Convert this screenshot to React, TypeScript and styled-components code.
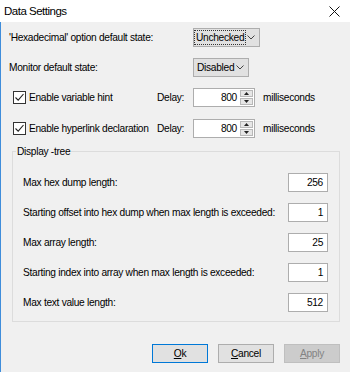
import React from 'react'
import styled, { createGlobalStyle } from 'styled-components'

const GlobalStyle = createGlobalStyle`
    body {
        margin: 0;
        background: #f0f0f0;
        font-family: "Liberation Sans", Arial, sans-serif;
        font-size: 10.2px;
        letter-spacing: -0.3px;
        color: #000;
        white-space: nowrap;
    }
`

const treeRows = [
    { label: 'Max hex dump length:', value: '256' },
    { label: 'Starting offset into hex dump when max length is exceeded:', value: '1' },
    { label: 'Max array length:', value: '25' },
    { label: 'Starting index into array when max length is exceeded:', value: '1' },
    { label: 'Max text value length:', value: '512' },
]

const App = () => {
  return (
    <Window>
        <GlobalStyle />
        <TitleBar>
            <Title>Data Settings</Title>
            <CloseIcon width="11" height="11" viewBox="0 0 11 11">
                <path d="M0.5 0.5 L10.5 10.5 M10.5 0.5 L0.5 10.5" stroke="#111" strokeWidth="1" fill="none" />
            </CloseIcon>
        </TitleBar>
        <Body>
            <Row $top={6}>
                <Label>'Hexadecimal' option default state:</Label>
                <Combo $width={67}>
                    <FocusText>Unchecked</FocusText>
                    <Chevron />
                </Combo>
            </Row>
            <Row $top={11}>
                <Label>Monitor default state:</Label>
                <Combo $width={56}>
                    <ComboText>Disabled</ComboText>
                    <Chevron />
                </Combo>
            </Row>
            <CheckRow $top={11}>
                <CheckLabel>
                    <CheckBox />
                    Enable variable hint
                </CheckLabel>
                <DelayLabel>Delay:</DelayLabel>
                <Spinner value="800" />
                <Unit>milliseconds</Unit>
            </CheckRow>
            <CheckRow $top={12}>
                <CheckLabel>
                    <CheckBox />
                    Enable hyperlink declaration
                </CheckLabel>
                <DelayLabel>Delay:</DelayLabel>
                <Spinner value="800" />
                <Unit>milliseconds</Unit>
            </CheckRow>
            <Group>
                <Legend>Display -tree</Legend>
                {treeRows.map((r) => (
                    <TreeRow key={r.label}>
                        <span>{r.label}</span>
                        <NumBox>{r.value}</NumBox>
                    </TreeRow>
                ))}
            </Group>
            <Buttons>
                <Button $focused><u>O</u>k</Button>
                <Button><u>C</u>ancel</Button>
                <Button $disabled><u>A</u>pply</Button>
            </Buttons>
        </Body>
    </Window>
  )
}

const CheckBox = () => (
    <Box>
        <svg width="11" height="11" viewBox="0 0 11 11">
            <path d="M1.5 5.5 L4.2 8.2 L9.5 2" stroke="#222" strokeWidth="1.1" fill="none" />
        </svg>
    </Box>
)

const Chevron = () => (
    <ChevronIcon width="8" height="5" viewBox="0 0 8 5">
        <path d="M0.5 0.5 L4 4 L7.5 0.5" stroke="#444" strokeWidth="1" fill="none" />
    </ChevronIcon>
)

const Spinner = ({ value }: { value: string }) => (
    <SpinBox>
        <SpinValue>{value}</SpinValue>
        <SpinButtons>
            <SpinBtn>
                <svg width="5" height="3" viewBox="0 0 5 3"><path d="M0 3 L2.5 0 L5 3 Z" fill="#222" /></svg>
            </SpinBtn>
            <SpinBtn>
                <svg width="5" height="3" viewBox="0 0 5 3"><path d="M0 0 L2.5 3 L5 0 Z" fill="#222" /></svg>
            </SpinBtn>
        </SpinButtons>
    </SpinBox>
)

const Window = styled.div`
    width: 350px;
    height: 372px;
    display: flex;
    flex-direction: column;
    overflow: hidden;
`

const TitleBar = styled.div`
    height: 22px;
    flex-shrink: 0;
    background: #fff;
    display: flex;
    align-items: center;
    justify-content: space-between;
    padding: 0 10px 0 4px;
`

const Title = styled.span`
    font-size: 11.5px;
    letter-spacing: -0.5px;
`

const CloseIcon = styled.svg`
    display: block;
`

const Body = styled.div`
    flex: 1;
    border-left: 1px solid #3f8ddb;
    padding-left: 8px;
    display: flex;
    flex-direction: column;
`

const Row = styled.div<{ $top: number }>`
    display: flex;
    align-items: center;
    height: 19px;
    margin-top: ${({ $top }) => $top}px;
`

const Label = styled.span`
    width: 184px;
    flex-shrink: 0;
`

const Combo = styled.div<{ $width: number }>`
    width: ${({ $width }) => $width}px;
    height: 19px;
    flex-shrink: 0;
    box-sizing: border-box;
    background: #e1e1e1;
    border: 1px solid #adadad;
    display: flex;
    align-items: center;
    justify-content: space-between;
    padding: 0 4px 0 1px;
`

const ComboText = styled.span`
    padding-left: 2px;
`

const FocusText = styled.span`
    outline: 1px dotted #333;
    outline-offset: 0;
    padding: 0 1px;
    line-height: 13px;
`

const ChevronIcon = styled.svg`
    display: block;
    flex-shrink: 0;
`

const CheckRow = styled(Row)`
    padding-left: 4px;
`

const CheckLabel = styled.label`
    display: flex;
    align-items: center;
    gap: 3px;
    width: 144px;
    flex-shrink: 0;
`

const Box = styled.span`
    width: 13px;
    height: 13px;
    flex-shrink: 0;
    box-sizing: border-box;
    border: 1px solid #333;
    background: #fff;
    display: flex;
    align-items: center;
    justify-content: center;
`

const DelayLabel = styled.span`
    width: 36px;
    flex-shrink: 0;
`

const SpinBox = styled.div`
    width: 62px;
    height: 19px;
    flex-shrink: 0;
    box-sizing: border-box;
    background: #fff;
    border: 1px solid #adadad;
    display: flex;
    align-items: center;
`

const SpinValue = styled.span`
    flex: 1;
    text-align: right;
    padding-right: 3px;
`

const SpinButtons = styled.div`
    width: 13px;
    height: 15px;
    margin-right: 1px;
    display: flex;
    flex-direction: column;
    gap: 1px;
`

const SpinBtn = styled.div`
    flex: 1;
    background: #e6e6e6;
    border: 1px solid #b8b8b8;
    display: flex;
    align-items: center;
    justify-content: center;
`

const Unit = styled.span`
    margin-left: 8px;
`

const Group = styled.fieldset`
    margin: 7px 0 0 3px;
    width: 328px;
    box-sizing: border-box;
    border: 1px solid #dcdcdc;
    padding: 15px 11px 9px 3px;
    display: flex;
    flex-direction: column;
    gap: 11px;
`

const Legend = styled.legend`
    padding: 0 1px;
    line-height: 13px;
`

const TreeRow = styled.div`
    display: flex;
    align-items: center;
    justify-content: space-between;
    padding-left: 7px;
    height: 19px;
`

const NumBox = styled.div`
    width: 40px;
    height: 19px;
    flex-shrink: 0;
    box-sizing: border-box;
    background: #fff;
    border: 1px solid #adadad;
    text-align: right;
    padding-right: 4px;
    line-height: 17px;
`

const Buttons = styled.div`
    display: flex;
    justify-content: flex-end;
    gap: 10px;
    margin-top: 22px;
    padding-right: 10px;
`

const Button = styled.div<{ $focused?: boolean; $disabled?: boolean }>`
    width: 56px;
    height: 19px;
    box-sizing: border-box;
    display: flex;
    align-items: center;
    justify-content: center;
    background: ${({ $disabled }) => ($disabled ? '#cccccc' : '#e1e1e1')};
    color: ${({ $disabled }) => ($disabled ? '#838383' : '#000')};
    border: 1px solid ${({ $focused, $disabled }) => ($focused ? '#0078d7' : $disabled ? '#bfbfbf' : '#adadad')};
`

export default App
